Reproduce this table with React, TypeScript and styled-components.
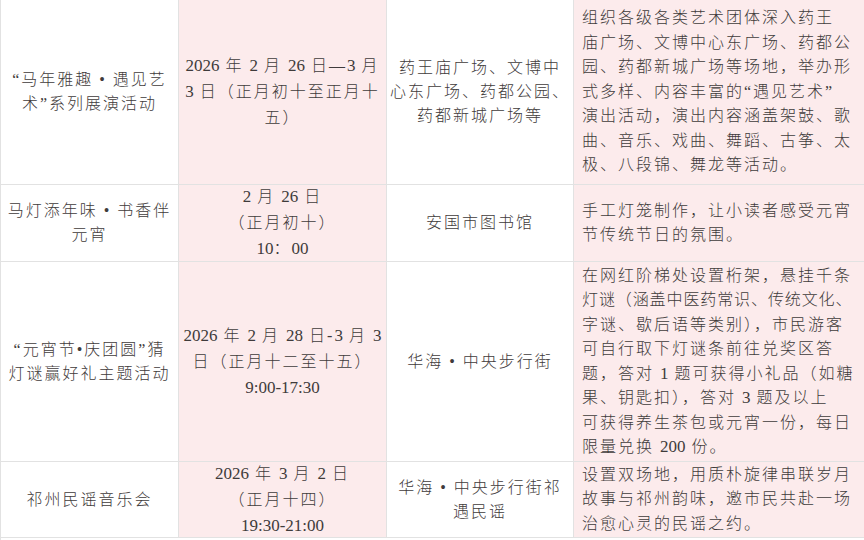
import React from 'react';
import styled, { createGlobalStyle } from 'styled-components';

const GlobalStyle = createGlobalStyle`
  html, body {
    margin: 0;
    padding: 0;
    background: #ffffff;
  }

  body {
    font-family: "Liberation Serif", "Noto Sans CJK SC", serif;
    font-weight: 300;
    color: #3f3b3b;
  }
`;

const Table = styled.div`
  width: 864px;
  height: 540px;
  overflow: hidden;
  display: grid;
  grid-template-columns: 178px 208px 187px 291px;
  grid-template-rows: 185px 77px 200px 76px;
  border-left: 1px solid #e2e2e2;
  box-sizing: border-box;
`;

const Cell = styled.div<{ $pink?: boolean; $left?: boolean; $lh?: number }>`
  display: flex;
  flex-direction: column;
  justify-content: center;
  align-items: ${(p) => (p.$left ? 'flex-start' : 'center')};
  padding: 0 ${(p) => (p.$left ? '8px' : '2px')};
  background: ${(p) => (p.$pink ? '#fcebec' : '#ffffff')};
  border-right: 1px solid #e2e2e2;
  border-bottom: 1px solid #e2e2e2;
  font-size: 16px;
  line-height: ${(p) => p.$lh ?? 24}px;
  letter-spacing: 2px;
  text-align: ${(p) => (p.$left ? 'left' : 'center')};
  overflow: hidden;
`;

const Line = styled.span<{ $tight?: boolean }>`
  display: block;
  white-space: nowrap;
  letter-spacing: ${(p) => (p.$tight ? '0.9px' : 'inherit')};
`;

const Num = styled.span`
  font-size: 17px;
  letter-spacing: 0;
`;

interface Row {
  name: string[];
  time: string[];
  place: string[];
  desc: string[];
  tight?: number;
};

const rows: Row[] = [
  {
    name: ['“马年雅趣 • 遇见艺', '术”系列展演活动'],
    time: ['2026 年 2 月 26 日—3 月', '3 日（正月初十至正月十', '五）'],
    place: ['药王庙广场、文博中', '心东广场、药都公园、', '药都新城广场等'],
    desc: [
      '组织各级各类艺术团体深入药王',
      '庙广场、文博中心东广场、药都公',
      '园、药都新城广场等场地，举办形',
      '式多样、内容丰富的“遇见艺术”',
      '演出活动，演出内容涵盖架鼓、歌',
      '曲、音乐、戏曲、舞蹈、古筝、太',
      '极、八段锦、舞龙等活动。',
    ],
  },
  {
    name: ['马灯添年味 • 书香伴', '元宵'],
    time: ['2 月 26 日', '（正月初十）', '10：00'],
    place: ['安国市图书馆'],
    desc: ['手工灯笼制作，让小读者感受元宵', '节传统节日的氛围。'],
  },
  {
    name: ['“元宵节•庆团圆”猜', '灯谜赢好礼主题活动'],
    time: ['2026 年 2 月 28 日-3 月 3', '日（正月十二至十五）', '9:00-17:30'],
    place: ['华海 • 中央步行街'],
    desc: [
      '在网红阶梯处设置桁架，悬挂千条',
      '灯谜（涵盖中医药常识、传统文化、',
      '字谜、歇后语等类别），市民游客',
      '可自行取下灯谜条前往兑奖区答',
      '题，答对 1 题可获得小礼品（如糖',
      '果、钥匙扣），答对 3 题及以上',
      '可获得养生茶包或元宵一份，每日',
      '限量兑换 200 份。',
    ],
    tight: 1,
  },
  {
    name: ['祁州民谣音乐会'],
    time: ['2026 年 3 月 2 日', '（正月十四）', '19:30-21:00'],
    place: ['华海 • 中央步行街祁', '遇民谣'],
    desc: ['设置双场地，用质朴旋律串联岁月', '故事与祁州韵味，邀市民共赴一场', '治愈心灵的民谣之约。'],
  },
];

// digits sit closer together than the spaced-out Chinese text
const renderText = (text: string) =>
  text.split(/(\d[\d:\-]*)/).map((part, i) =>
    /^\d/.test(part) ? <Num key={i}>{part}</Num> : part
  );

const App: React.FC = () => {
  return (
    <>
      <GlobalStyle />
      <Table>
        {rows.map((row, index) => (
          <React.Fragment key={index}>
            <Cell>
              {row.name.map((l, i) => <Line key={i}>{l}</Line>)}
            </Cell>
            <Cell $pink $lh={26}>
              {row.time.map((l, i) => <Line key={i}>{renderText(l)}</Line>)}
            </Cell>
            <Cell>
              {row.place.map((l, i) => <Line key={i}>{l}</Line>)}
            </Cell>
            <Cell $pink $left $lh={24.5}>
              {row.desc.map((l, i) => (
                <Line key={i} $tight={row.tight === i}>{renderText(l)}</Line>
              ))}
            </Cell>
          </React.Fragment>
        ))}
      </Table>
    </>
  );
};

export default App;
